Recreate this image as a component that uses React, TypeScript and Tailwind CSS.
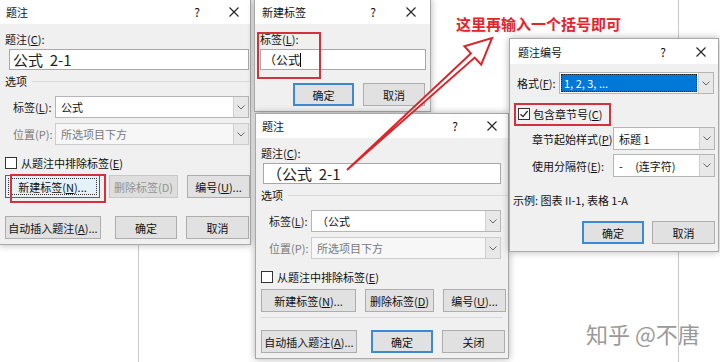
import React from "react";

const U = ({ children }: { children: React.ReactNode }) => (
  <span className="underline decoration-1 underline-offset-[1px]">{children}</span>
);

function CloseX() {
  return (
    <svg width="10" height="10" viewBox="0 0 10 10">
      <path d="M0.5 0.5L9.5 9.5M9.5 0.5L0.5 9.5" stroke="#222" strokeWidth="1.1" />
    </svg>
  );
}

function Chevron() {
  return (
    <svg width="8" height="5" viewBox="0 0 8 5">
      <path d="M0.5 0.5L4 4L7.5 0.5" stroke="#666" strokeWidth="1" fill="none" />
    </svg>
  );
}

function TitleBar({ title, cls, pl, pr, gap }: { title: string; cls: string; pl: string; pr: string; gap: string }) {
  return (
    <div className={"flex shrink-0 items-center whitespace-nowrap bg-white text-[11px] leading-[16px] text-[#111] " + cls + " " + pl + " " + pr}>
      <span>{title}</span>
      <span className="ml-auto w-[12px] text-center text-[12px]">?</span>
      <span className={gap} />
      <span className="flex w-[10px] items-center justify-center">
        <CloseX />
      </span>
    </div>
  );
}

function Select({ cls, children, disabled, highlight }: { cls: string; children: React.ReactNode; disabled?: boolean; highlight?: boolean }) {
  return (
    <div className={"flex shrink-0 border " + (disabled ? "border-[#cccccc] bg-[#f7f7f7] text-[#7a7a7a]" : "border-[#b5b5b5] bg-white text-[#111]") + " " + cls}>
      {highlight ? (
        <div className="flex flex-1 items-center p-[1px]">
          <div className="flex h-full w-full items-center border border-dotted border-[#222] bg-[#0078d7] pl-[2px] text-white">{children}</div>
        </div>
      ) : (
        <div className="flex flex-1 items-center whitespace-pre pl-[5px]">{children}</div>
      )}
      <div className="flex w-[15px] items-center justify-center border-l border-[#cfcfcf] bg-[#e8e8e8]">
        <Chevron />
      </div>
    </div>
  );
}

type Kind = "normal" | "default" | "focus" | "disabled";

function Btn({ w, kind = "normal", children }: { w: string; kind?: Kind; children: React.ReactNode }) {
  const k =
    kind === "default"
      ? "border-2 border-[#3d8ad2] bg-[#e1e1e1] text-[#111]"
      : kind === "focus"
      ? "border border-[#0078d7] bg-[#e5f1fb] text-[#111]"
      : kind === "disabled"
      ? "border border-[#c8c8c8] bg-[#dedede] text-[#939393]"
      : "border border-[#adadad] bg-[#e1e1e1] text-[#111]";
  return (
    <div className={"relative flex h-[23px] shrink-0 items-center justify-center whitespace-nowrap text-[11px] leading-[16px] " + k + " " + w}>
      {kind === "focus" && <div className="absolute inset-[2px] border border-dotted border-[#333]" />}
      {children}
    </div>
  );
}

function CheckBox({ checked }: { checked?: boolean }) {
  return (
    <div className="flex h-[12px] w-[12px] shrink-0 items-center justify-center border border-[#333] bg-white">
      {checked && (
        <svg width="10" height="10" viewBox="0 0 10 10">
          <path d="M1.5 5.2L4 7.6L8.6 2" stroke="#222" strokeWidth="1.2" fill="none" />
        </svg>
      )}
    </div>
  );
}

function CaptionDialog({
  pos,
  inputCls,
  inputText,
  selectCls,
  selectText,
  first,
}: {
  pos: string;
  inputCls: string;
  inputText: string;
  selectCls: string;
  selectText: string;
  first?: boolean;
}) {
  return (
    <div className={"absolute flex flex-col border border-[#a9a9a9] bg-[#f0f0f0] shadow-[0_0_7px_rgba(0,0,0,0.3)] " + pos}>
      <TitleBar title="题注" cls="h-[24px]" pl="pl-[6px]" pr="pr-[11px]" gap="w-[26px]" />
      <div className="flex flex-col whitespace-nowrap pt-[7px] pb-[6px] text-[11px] leading-[16px] text-[#111]">
        <div className="pl-[5px]">
          题注(<U>C</U>):
        </div>
        <div className={"mt-[2px] flex h-[21px] items-center whitespace-pre border border-[#a8a8a8] bg-white pl-[3px] text-[15px] leading-[20px] text-[#222] " + inputCls}>
          {inputText}
        </div>
        <div className="mt-[3px] flex items-center pl-[5px]">
          <span>选项</span>
          <span className="ml-[5px] h-px flex-1 bg-[#dadada]" />
        </div>
        <div className="mt-[7px] flex items-center pl-[13px]">
          <span className="w-[42px] shrink-0 text-[#222]">
            标签(<U>L</U>):
          </span>
          <Select cls={"h-[22px] " + selectCls}>{selectText}</Select>
        </div>
        <div className="mt-[5px] flex items-center pl-[13px]">
          <span className="w-[42px] shrink-0 text-[#7a7a7a]">位置(P):</span>
          <Select cls={"h-[22px] " + selectCls} disabled>
            所选项目下方
          </Select>
        </div>
        <div className="mt-[10px] flex items-center gap-[4px] pl-[5px]">
          <CheckBox />
          <span>
            从题注中排除标签(<U>E</U>)
          </span>
        </div>
        <div className="mt-[4px] flex items-center pl-[5px]">
          <Btn w="w-[95px]" kind={first ? "focus" : "normal"}>
            新建标签(<U>N</U>)...
          </Btn>
          <div className="w-[9px] shrink-0" />
          <Btn w="w-[69px]" kind={first ? "disabled" : "normal"}>
            {first ? "删除标签(D)" : <>删除标签(<U>D</U>)</>}
          </Btn>
          <div className="w-[9px] shrink-0" />
          <Btn w="w-[63px]">
            编号(<U>U</U>)...
          </Btn>
        </div>
        {first ? <div className="h-[18px]" /> : <div className="mx-[5px] mt-[5px] mb-[12px] h-px bg-[#dadada]" />}
        <div className="flex items-center pl-[5px]">
          <Btn w="w-[96px]">
            自动插入题注(<U>A</U>)...
          </Btn>
          <div className="w-[14px] shrink-0" />
          <Btn w="w-[62px]" kind={first ? "normal" : "default"}>
            确定
          </Btn>
          <div className="w-[9px] shrink-0" />
          <Btn w="w-[63px]">{first ? "取消" : "关闭"}</Btn>
        </div>
      </div>
    </div>
  );
}

export default function App() {
  return (
    <div className="relative h-[362px] w-[720px] overflow-hidden bg-white font-['Noto_Sans_CJK_SC','Noto_Sans',sans-serif]">
      {/* document background lines */}
      <div className="absolute left-[138px] top-0 h-full w-px bg-[#c9c9c9]" />
      <div className="absolute left-[678px] top-0 h-full w-px bg-[#c9c9c9]" />

      {/* Dialog 1 */}
      <CaptionDialog
        pos="left-[-1px] top-[-1px] w-[252px] h-[246px]"
        inputCls="ml-[9px] w-[240px]"
        inputText="公式  2-1"
        selectCls="w-[194px]"
        selectText="公式"
        first
      />

      {/* Dialog 2: 新建标签 */}
      <div className="absolute left-[254px] top-[-1px] flex h-[113px] w-[177px] flex-col border border-[#a9a9a9] bg-[#f0f0f0] shadow-[0_0_7px_rgba(0,0,0,0.3)]">
        <TitleBar title="新建标签" cls="h-[24px]" pl="pl-[7px]" pr="pr-[14px]" gap="w-[27px]" />
        <div className="flex flex-col whitespace-nowrap pt-[7px] text-[11px] leading-[16px] text-[#111]">
          <div className="pl-[5px]">
            标签(<U>L</U>):
          </div>
          <div className="ml-[5px] mt-[2px] flex h-[21px] w-[166px] items-center border border-[#a8a8a8] bg-white pl-[3px] text-[12px]">
            <span>（公式</span>
            <span className="h-[14px] w-px bg-black" />
          </div>
          <div className="mt-[13px] flex items-center pl-[38px]">
            <Btn w="w-[61px]" kind="default">
              确定
            </Btn>
            <div className="w-[9px] shrink-0" />
            <Btn w="w-[62px]">取消</Btn>
          </div>
        </div>
      </div>

      {/* Dialog 3 */}
      <CaptionDialog
        pos="left-[255px] top-[113px] w-[254px] h-[246px]"
        inputCls="ml-[7px] w-[238px]"
        inputText="（公式  2-1"
        selectCls="w-[190px]"
        selectText="（公式"
      />

      {/* Dialog 4: 题注编号 */}
      <div className="absolute left-[509px] top-[38px] flex h-[214px] w-[210px] flex-col border border-[#a9a9a9] bg-[#f0f0f0] shadow-[0_0_7px_rgba(0,0,0,0.3)]">
        <TitleBar title="题注编号" cls="h-[25px]" pl="pl-[8px]" pr="pr-[12px]" gap="w-[27px]" />
        <div className="flex flex-col whitespace-nowrap text-[11px] leading-[16px] text-[#111]">
          <div className="mt-[8px] flex items-center pl-[7px]">
            <span className="w-[42px] shrink-0">
              格式(<U>F</U>):
            </span>
            <Select cls="h-[22px] w-[155px]" highlight>
              1, 2, 3, ...
            </Select>
          </div>
          <div className="mt-[12px] flex items-center gap-[3px] pl-[8px]">
            <CheckBox checked />
            <span>
              包含章节号(<U>C</U>)
            </span>
          </div>
          <div className="mt-[5px] flex items-center pl-[22px]">
            <span className="w-[81px] shrink-0">
              章节起始样式(<U>P</U>)
            </span>
            <Select cls="h-[23px] w-[102px]">标题 1</Select>
          </div>
          <div className="mt-[4px] flex items-center pl-[22px]">
            <span className="w-[81px] shrink-0">
              使用分隔符(<U>E</U>):
            </span>
            <Select cls="h-[23px] w-[102px]">{"-     (连字符)"}</Select>
          </div>
          <div className="mt-[15px] whitespace-pre pl-[3px]">示例: 图表 II-1, 表格 1-A</div>
          <div className="mt-[13px] flex items-center pl-[72px]">
            <Btn w="w-[62px]" kind="default">
              确定
            </Btn>
            <div className="w-[8px] shrink-0" />
            <Btn w="w-[63px]">取消</Btn>
          </div>
        </div>
      </div>

      {/* Red highlight boxes */}
      <div className="absolute left-[10px] top-[174px] h-[29px] w-[96px] border-2 border-[#d2323c]" />
      <div className="absolute left-[257px] top-[32px] h-[47px] w-[64px] border-2 border-[#d2323c]" />
      <div className="absolute left-[514px] top-[103px] h-[23px] w-[97px] border-2 border-[#d2323c]" />

      {/* Arrow */}
      <svg className="pointer-events-none absolute left-0 top-0" width="720" height="362" viewBox="0 0 720 362">
        <polygon
          points="347,170 474.7,57.6 481.2,64.7 492,38 464.4,46.3 470.9,53.4"
          fill="#ffffff"
          stroke="#d8262c"
          strokeWidth="2"
          strokeLinejoin="miter"
        />
      </svg>

      {/* Annotation */}
      <div className="absolute left-[456px] top-[14px] whitespace-nowrap text-[15px] font-bold leading-[20px] text-[#e0262c] [text-shadow:0_0_2px_#fff,0_0_3px_#fff,1px_1px_2px_rgba(0,0,0,0.15)]">
        这里再输入一个括号即可
      </div>

      {/* Watermark */}
      <div className="absolute left-[586px] top-[319px] whitespace-nowrap text-[22px] leading-[28px] text-[#9a9a9a] [text-shadow:0_0_2px_#fff]">
        知乎 @不唐
      </div>
    </div>
  );
}
